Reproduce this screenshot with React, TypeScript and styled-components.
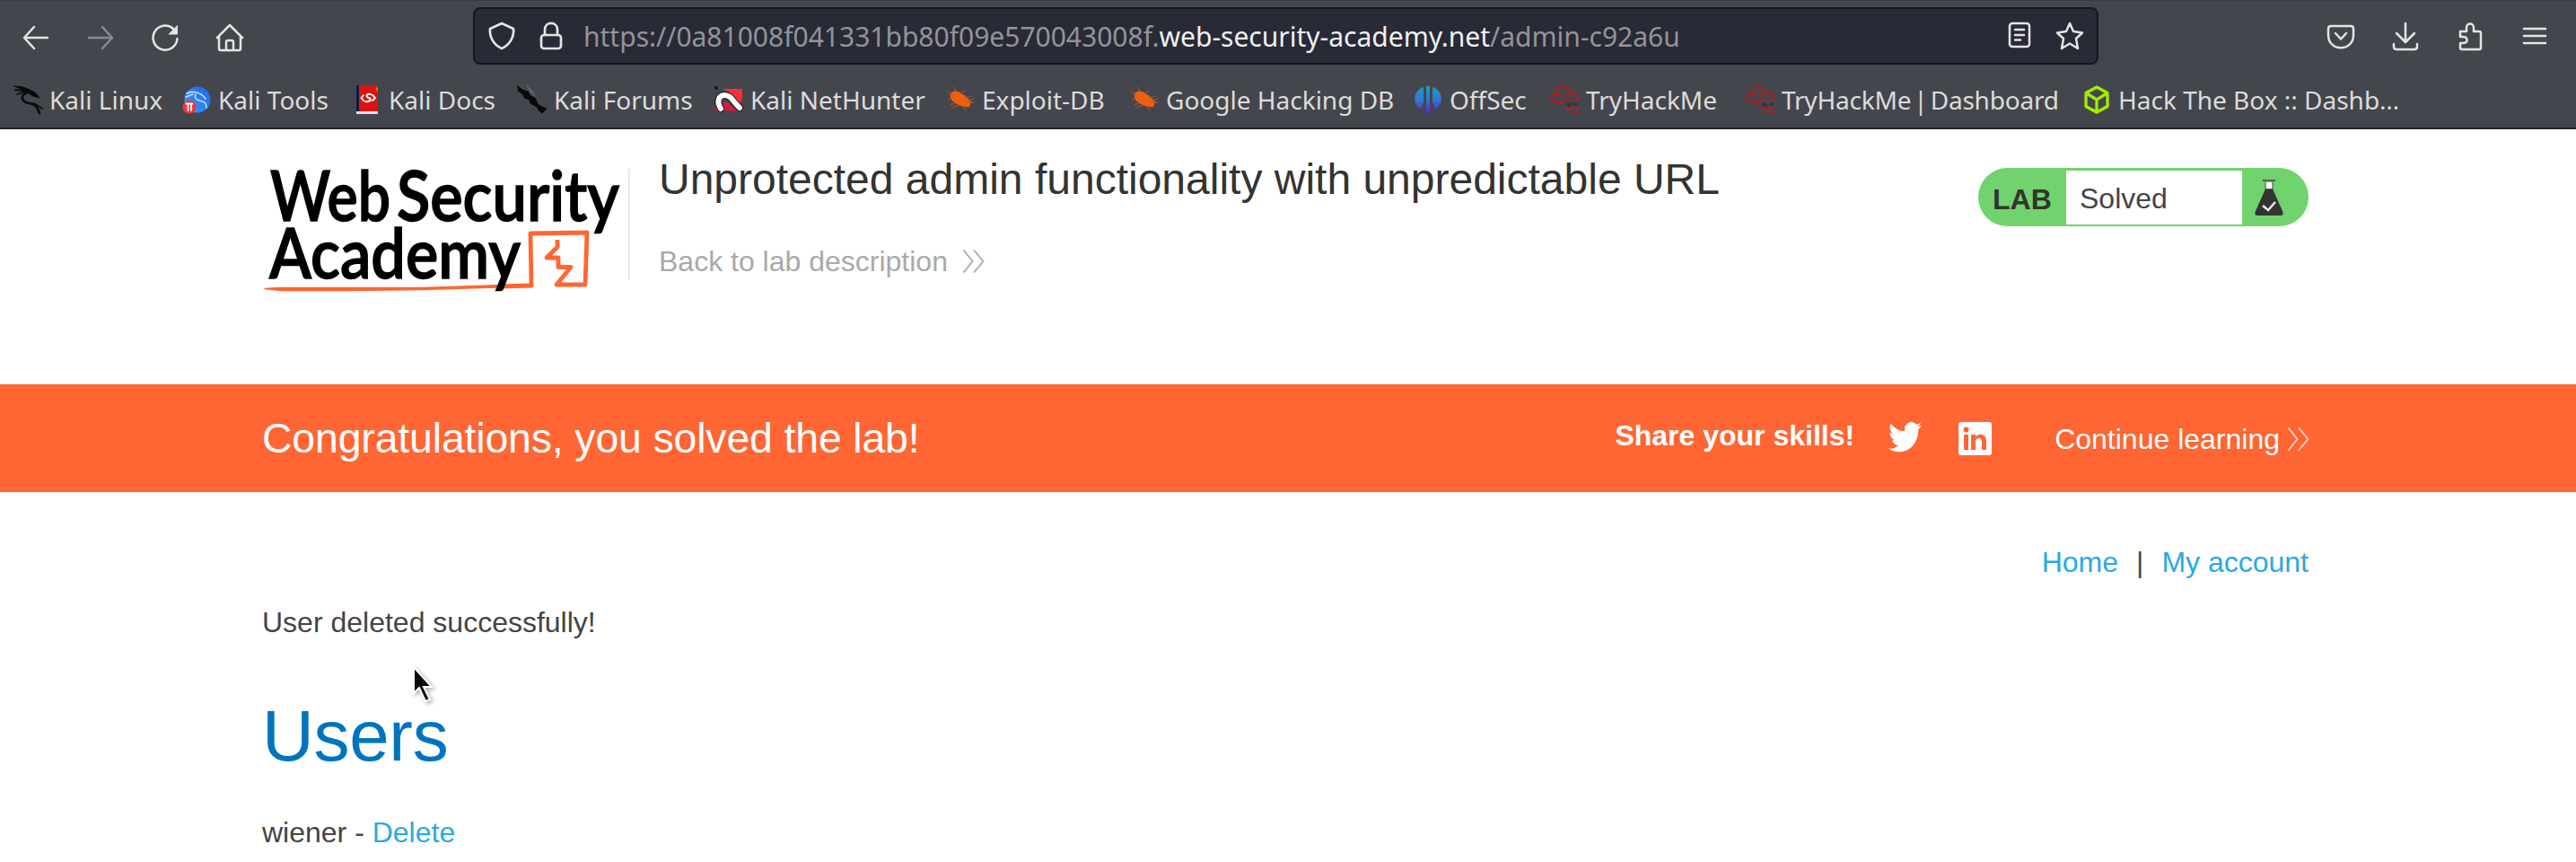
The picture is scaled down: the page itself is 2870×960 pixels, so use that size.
import React from 'react';
import styled, { createGlobalStyle } from 'styled-components';

const Global = createGlobalStyle`
  * { box-sizing: border-box; }
  html, body { margin: 0; padding: 0; background: #fff; overflow: hidden; }
  svg { display: block; overflow: visible; flex: none; }
`;

const Page = styled.div`
  width: 2870px;
  height: 960px;
  overflow: hidden;
  background: #fff;
  color: #444;
  font: 32px/40px "Liberation Sans", Arial, sans-serif;
`;

const Chrome = styled.header`
  height: 144px;
  background: #44464d;
  border-top: 1px solid #3a3c45;
  border-bottom: 2px solid #25262c;
  font-family: "Noto Sans", sans-serif;
`;

const NavRow = styled.div`
  display: flex;
  height: 79px;
  padding: 0 30px 0 24px;
`;

const NavButtons = styled.div`
  display: flex;
  align-items: center;
  gap: 40px;
  width: 503px;
  padding-top: 2px;
`;

const UrlBar = styled.div`
  display: flex;
  align-items: center;
  width: 1811px;
  height: 64px;
  margin-top: 7px;
  padding: 0 14px;
  background: #282a36;
  border: 2px solid #16171c;
  border-radius: 8px;
`;

const UrlText = styled.div`
  flex: 1;
  margin-left: 23px;
  padding-top: 2px;
  color: #939499;
  font-size: 30px;
  line-height: 40px;
  white-space: nowrap;
`;

const UrlHost = styled.span`
  color: #f0f0f2;
`;

const UrlIcons = styled.div<{ $gap: number }>`
  display: flex;
  align-items: center;
  gap: ${(p) => p.$gap}px;
`;

const Tools = styled.div`
  display: flex;
  align-items: center;
  justify-content: flex-end;
  gap: 40px;
  flex: 1;
`;

const Bookmarks = styled.nav`
  display: flex;
  align-items: center;
  height: 62px;
  padding-left: 15px;
`;

const Bookmark = styled.div<{ $width: number; $tight?: boolean }>`
  display: flex;
  align-items: center;
  gap: 8px;
  width: ${(p) => p.$width}px;
  flex: none;
  color: #dcdcda;
  font-size: 28px;
  line-height: 40px;
  white-space: nowrap;
  letter-spacing: ${(p) => (p.$tight ? '-0.2px' : '0')};
  word-spacing: ${(p) => (p.$tight ? '-4px' : '0')};
`;

const LabHeader = styled.section`
  display: flex;
  height: 284px;
  padding: 0 298px 0 291px;
`;

const LogoBox = styled.div`
  width: 411px;
  height: 124px;
  margin-top: 44px;
  border-right: 2px solid #e8e8e8;
`;

const LabTitle = styled.div`
  flex: 1;
  padding: 28px 0 0 32px;
`;

const Title = styled.h2`
  margin: 0 0 45px;
  color: #333332;
  font-size: 48px;
  line-height: 56px;
  font-weight: 400;
  white-space: nowrap;
`;

const BackLink = styled.a`
  display: flex;
  align-items: center;
  gap: 17px;
  color: #a9a9a9;
  line-height: 36px;
`;

const Status = styled.div`
  display: flex;
  width: 368px;
  height: 65px;
  margin-top: 43px;
  overflow: hidden;
  background: #70d36e;
  border-radius: 33px;
`;

const StatusTag = styled.strong`
  width: 98px;
  padding: 15px 0 0 16px;
  color: #333332;
  line-height: 40px;
`;

const StatusText = styled.div`
  width: 196px;
  height: 60px;
  margin-top: 3px;
  padding: 11px 0 0 15px;
  background: #fff;
`;

const FlaskCell = styled.div`
  padding: 13px 0 0 14px;
`;

const Banner = styled.section`
  display: flex;
  align-items: flex-start;
  height: 120px;
  padding: 0 297px 0 292px;
  background: #ff6633;
  color: #fff;
`;

const BannerTitle = styled.div`
  flex: 1;
  padding-top: 32px;
  font-size: 46.4px;
  line-height: 56px;
  letter-spacing: -0.14px;
`;

const Share = styled.strong`
  margin: 37px 38px 0 0;
`;

const Social = styled.div`
  display: flex;
  gap: 41px;
  width: 185px;
  margin-top: 42px;
`;

const Continue = styled.a`
  display: flex;
  align-items: center;
  gap: 9px;
  margin-top: 41px;
`;

const Content = styled.main`
  padding: 58px 298px 0 292px;
`;

const TopLinks = styled.div`
  display: flex;
  justify-content: flex-end;
  gap: 20px;
`;

const Link = styled.a`
  color: #29a9e6;
`;

const Message = styled.p`
  margin: 27px 0 0;
`;

const Heading = styled.h1`
  margin: 59px 0 0;
  color: #0074be;
  font-size: 80px;
  line-height: 96px;
  font-weight: 400;
  letter-spacing: -0.3px;
`;

const UserRow = styled.div`
  margin-top: 39px;
`;

const Pointer = styled.div`
  position: absolute;
  left: 458px;
  top: 740px;
`;

const PointerArrow = styled.svg`
  filter: drop-shadow(2px 2px 2px #0005);
`;

type IconProps = { w?: number; h?: number; children: React.ReactNode; color?: string; sw?: number };

const Icon = ({ w = 32, h = 32, children, color = '#e4e4e4', sw = 2.5 }: IconProps) => (
  <svg width={w} height={h} viewBox={`0 0 ${w} ${h}`} fill="none" stroke={color} strokeWidth={sw} strokeLinecap="round" strokeLinejoin="round">
    {children}
  </svg>
);

const Chevrons = ({ color }: { color: string }) => (
  <Icon w={24} h={26} color={color} sw={1.9}>
    <path d="M1 1 10.500 13 1 25M12.500 1 22.500 13 12.500 25" />
  </Icon>
);

const KaliDragon = () => (
  <Icon color="#08090b" sw={2}>
    <path d="M1 1 11 2 18 5 24 8 29 14 22 12 17 9 11 7 8 4Z" fill="#08090b" strokeWidth="1" />
    <path d="M2 5 11 6M4 10 12 7" strokeWidth="1.800" />
    <path d="M14 9C9 10 8 16 14 19C20 21 25 19 29 31" strokeWidth="2.600" />
    <path d="M22 20C27 21 28 24 32 26" strokeWidth="1.500" />
  </Icon>
);

const KaliTools = () => (
  <Icon sw={0}>
    <defs>
      <linearGradient id="tools" x1="0" y1="1" x2="1" y2="0">
        <stop offset="0" stopColor="#35a0ff" />
        <stop offset="1" stopColor="#1c62f0" />
      </linearGradient>
    </defs>
    <circle cx="17" cy="16" r="14.500" fill="url(#tools)" />
    <path d="M5 9C13 5 22 9 26 15M15 10C12 17 21 17 25 19C27 21 27 23 27 25M4 13 12 10" stroke="#c4e0ff" strokeWidth="1.600" />
    <circle cx="8" cy="24" r="7.500" fill="#f2353c" />
    <path d="M4.500 20.500H11.500M6.500 21V28M10 21V28" stroke="#fff" strokeWidth="1.800" />
  </Icon>
);

const KaliDocs = () => (
  <Icon sw={0}>
    <path d="M4 0H28V29H4Z" fill="#d8160f" />
    <path d="M4 0H7V29H4Z" fill="#0d1840" />
    <path d="M4 29H28V32H4Z" fill="#e3e0e2" />
    <path d="M26 1 28 4V8L26 5Z" fill="#e8761a" />
    <path d="M12 11 9.500 14 12 17M22 11 25 14 22 17M20 10C15 9 14 13 18 14S19 19 14 18" stroke="#fff" strokeWidth="1.900" />
  </Icon>
);

const KaliForums = () => (
  <Icon color="#08090b" sw={1}>
    <path d="M0 1 5 5 11 7 14 12 19 14 22 21 27 24 32 26 27 31 24 29 21 24 14 20 13 16 7 14 6 10 1 7Z" fill="#08090b" />
    <path d="M10 0 16 9M14 4 19 12" stroke="#777980" />
  </Icon>
);

const NetHunter = () => (
  <Icon sw={0}>
    <path d="M9 4H31V14L27 24 17 8Z" fill="#fa3038" />
    <path d="M0 22 7 19 9 29H1Z" fill="#c8163c" />
    <path d="M11 28C7 19 12 16 16 20L26 29Z" fill="#d31b40" />
    <path d="M7 26C2 18 5 11 11 11C19 11 21 19 28 25" stroke="#16171c" strokeWidth="8" />
    <path d="M7 26C2 18 5 11 11 11C19 11 21 19 28 25" stroke="#fff" strokeWidth="6" />
    <circle cx="2" cy="3" r="2" fill="#16171c" />
  </Icon>
);

const Exploit = () => (
  <Icon color="#b4551f" sw={1}>
    <path d="M5 9C9 5 14 6 18 10C22 11 25 16 28 18L26 24C20 25 13 22 9 19C5 16 4 12 5 9Z" fill="#ee600f" stroke="none" />
    <path d="M6 10 2 7M6 15 2 16M10 20 4 22M15 22 6 25M19 23 22 28M25 19 31 19M22 14 29 12M16 9 21 6M11 7 9 2M25 17 31 15" />
  </Icon>
);

const OffSec = () => (
  <Icon sw={0}>
    <defs>
      <linearGradient id="offsec" x1="0" y1="0" x2="0" y2="32" gradientUnits="userSpaceOnUse">
        <stop offset="0" stopColor="#10a7c4" />
        <stop offset="0.550" stopColor="#3870d2" />
        <stop offset="1" stopColor="#661bd0" />
      </linearGradient>
    </defs>
    <path d="M11 2V18L8 27C-2 20-1 6 11 2ZM21 2V18L24 27C34 20 33 6 21 2ZM14 1H18V20L19 30 16 32 13 30 14 20Z" fill="url(#offsec)" />
  </Icon>
);

const TryHackMe = () => (
  <Icon color="#a81f26" sw={2.3}>
    <path d="M16 19H8C-1 18-1 9 7 9C7-1 21-2 22 8C28 8 31 10 31 13M7 9C10 9 12 10 12 12M22 8C19 8 17 10 17 12" />
    <path d="M18 16H22M24 16H27M29 16H32M18 26H24M25 26H31M22 31H24M27 30H32" strokeWidth="2.400" strokeLinecap="butt" />
    <path d="M18 21H24M26 21H31M20 23H22" stroke="#303239" strokeWidth="2.400" strokeLinecap="butt" />
  </Icon>
);

const HackTheBox = () => (
  <Icon color="#9fef00" sw={3.3}>
    <path d="M16 2 28 8.500V23.500L16 30 4 23.500V8.500ZM4 8.500 16 16 28 8.500M16 16V30" />
  </Icon>
);

const bookmarks = [
  { label: 'Kali Linux', icon: <KaliDragon />, width: 188 },
  { label: 'Kali Tools', icon: <KaliTools />, width: 190 },
  { label: 'Kali Docs', icon: <KaliDocs />, width: 184 },
  { label: 'Kali Forums', icon: <KaliForums />, width: 219 },
  { label: 'Kali NetHunter', icon: <NetHunter />, width: 258 },
  { label: 'Exploit-DB', icon: <Exploit />, width: 205 },
  { label: 'Google Hacking DB', icon: <Exploit />, width: 316 },
  { label: 'OffSec', icon: <OffSec />, width: 152 },
  { label: 'TryHackMe', icon: <TryHackMe />, width: 218 },
  { label: 'TryHackMe | Dashboard', icon: <TryHackMe />, width: 375, tight: true },
  { label: 'Hack The Box :: Dashb…', icon: <HackTheBox />, width: 360 },
];

const Logo = () => (
  <svg width="402" height="138" viewBox="0 0 402 138" fontFamily="Lato, sans-serif" fontWeight="600" fontSize="77">
    <g fill="none" stroke="#ff6633" strokeLinejoin="round">
      <path d="M4 133.500 20 132.500H180L270 129.500 300 128.500V131L180 134.500 100 135.500H22Z" fill="#ff6633" strokeWidth="1.300" />
      <path d="M265 131 301 130 300 72 363 71 361 129 329 129 345 109.500H331V99L318 99 330 87V79" strokeWidth="4.800" />
    </g>
    <g fill="#000" stroke="#000" strokeWidth="1.400">
      <text x="10" y="57.500" textLength="134" lengthAdjust="spacingAndGlyphs">Web</text>
      <text x="151" y="57.500" textLength="248" lengthAdjust="spacingAndGlyphs">Security</text>
      <text x="9" y="121.500" textLength="280" lengthAdjust="spacingAndGlyphs">Academy</text>
    </g>
  </svg>
);

export default function App() {
  return (
    <Page>
      <Global />
      <Chrome>
        <NavRow>
          <NavButtons>
            <Icon><path d="M29 16H4M14 4 3 16 14 28" /></Icon>
            <Icon color="#898a8f"><path d="M3 16H28M18 4 29 16 18 28" /></Icon>
            <Icon><path d="M29.500 17A13.500 13.500 0 1 1 25 6" /><path d="M29.500 3V12H20.500Z" fill="#e4e4e4" strokeWidth="1" /></Icon>
            <Icon><path d="M2 16 16 2 30 16M4 14V28Q4 30 6 30H26Q28 30 28 28V14M12 30V21Q12 19 14 19H18Q20 19 20 21V30" /></Icon>
          </NavButtons>
          <UrlBar>
            <UrlIcons $gap={26}>
              <Icon sw={2.7}><path d="M16 2 29 8C30 17 25 26 16 30C7 26 2 17 3 8Z" /></Icon>
              <Icon w={26} sw={2.7}><rect x="2" y="15" width="22" height="15" rx="3" /><path d="M6 15V9C6-.500 20-.500 20 9V15" /></Icon>
            </UrlIcons>
            <UrlText>
              https://0a81008f041331bb80f09e570043008f.<UrlHost>web-security-academy.net</UrlHost>/admin-c92a6u
            </UrlText>
            <UrlIcons $gap={27}>
              <Icon w={26}><rect x="2" y="2" width="22" height="26" rx="3" /><path d="M8 9H18M8 15H18M8 20.500H14" /></Icon>
              <Icon><path d="M16 2 20 11 30 12.500 23 19 25 30 16 24.500 7 30 9 19 2 12.500 12 11Z" /></Icon>
            </UrlIcons>
          </UrlBar>
          <Tools>
            <Icon><path d="M5 4H27Q30 4 30 7V14C30 33 2 33 2 14V7Q2 4 5 4ZM10 12 16 18.500 22 12" /></Icon>
            <Icon><path d="M16 1V21M6 12 16 22 26 12M3 24V27Q3 30 6 30H26Q29 30 29 27V24" /></Icon>
            <Icon><path d="M5 10H12V6C12 0 20 0 20 6V10H26Q28 10 28 12V28Q28 30 26 30H7Q5 30 5 28V23H8C14 23 14 16 8 16H5Z" /></Icon>
            <Icon><path d="M4 7H28M4 15H28M4 23H28" /></Icon>
          </Tools>
        </NavRow>
        <Bookmarks>
          {bookmarks.map((b) => (
            <Bookmark key={b.label} $width={b.width} $tight={b.tight}>
              {b.icon}
              <span>{b.label}</span>
            </Bookmark>
          ))}
        </Bookmarks>
      </Chrome>
      <LabHeader>
        <LogoBox><Logo /></LogoBox>
        <LabTitle>
          <Title>Unprotected admin functionality with unpredictable URL</Title>
          <BackLink>Back to lab description<Chevrons color="#aaaaaa" /></BackLink>
        </LabTitle>
        <Status>
          <StatusTag>LAB</StatusTag>
          <StatusText>Solved</StatusText>
          <FlaskCell>
            <svg width="32" height="40" viewBox="0 0 32 40">
              <path d="M9 1H23" stroke="#555" strokeWidth="2" />
              <path d="M12 2H20V11H12Z" fill="#fff" stroke="#68806a" strokeWidth="1.500" />
              <path d="M12 10.500H20L31 35Q33 40 29 40H3Q-1 40 1 35Z" fill="#333332" />
              <path d="M9 29 15 34 23 25" fill="none" stroke="#e6e6e6" strokeWidth="2.600" />
            </svg>
          </FlaskCell>
        </Status>
      </LabHeader>
      <Banner>
        <BannerTitle>Congratulations, you solved the lab!</BannerTitle>
        <Share>Share your skills!</Share>
        <Social>
          <svg width="37" height="34" viewBox="0 0 24 20" preserveAspectRatio="none" fill="#fff">
            <path d="M24 2.370a9.600 9.600 0 0 1-2.830.780A4.900 4.900 0 0 0 23.340.420a9.900 9.900 0 0 1-3.130 1.200A4.920 4.920 0 0 0 11.820 6.100 13.980 13.980 0 0 1 1.670.960a4.930 4.930 0 0 0 1.520 6.570A4.900 4.900 0 0 1 .960 6.920v.060a4.930 4.930 0 0 0 3.950 4.830 4.900 4.900 0 0 1-2.220.080 4.930 4.930 0 0 0 4.600 3.420A9.900 9.900 0 0 1 0 17.350 13.940 13.940 0 0 0 7.550 19.560c9.060 0 14.010-7.500 14.010-14.010l-.020-.640A10 10 0 0 0 24 2.370Z" />
          </svg>
          <svg width="37" height="37" viewBox="0 0 37 37">
            <rect width="37" height="37" rx="3" fill="#fff" />
            <g fill="#ff6633">
              <circle cx="8.500" cy="8.500" r="3" />
              <path d="M6 14H11V31H6Z" />
              <path d="M14 14H19V16.500C22 12 31 12.500 31 21V31H26V22C26 16.500 19 16.500 19 22V31H14Z" />
            </g>
          </svg>
        </Social>
        <Continue>Continue learning<Chevrons color="#ffd1c2" /></Continue>
      </Banner>
      <Content>
        <TopLinks>
          <Link>Home</Link>
          <span>|</span>
          <Link>My account</Link>
        </TopLinks>
        <Message>User deleted successfully!</Message>
        <Heading>Users</Heading>
        <UserRow>wiener - <Link>Delete</Link></UserRow>
      </Content>
      <Pointer>
        <PointerArrow width="30" height="46" viewBox="0 0 30 46">
          <path d="M3 3V32L9 26 16 41 21 39 14 25H23Z" fill="#080808" stroke="#fff" strokeWidth="2" />
        </PointerArrow>
      </Pointer>
    </Page>
  );
}
